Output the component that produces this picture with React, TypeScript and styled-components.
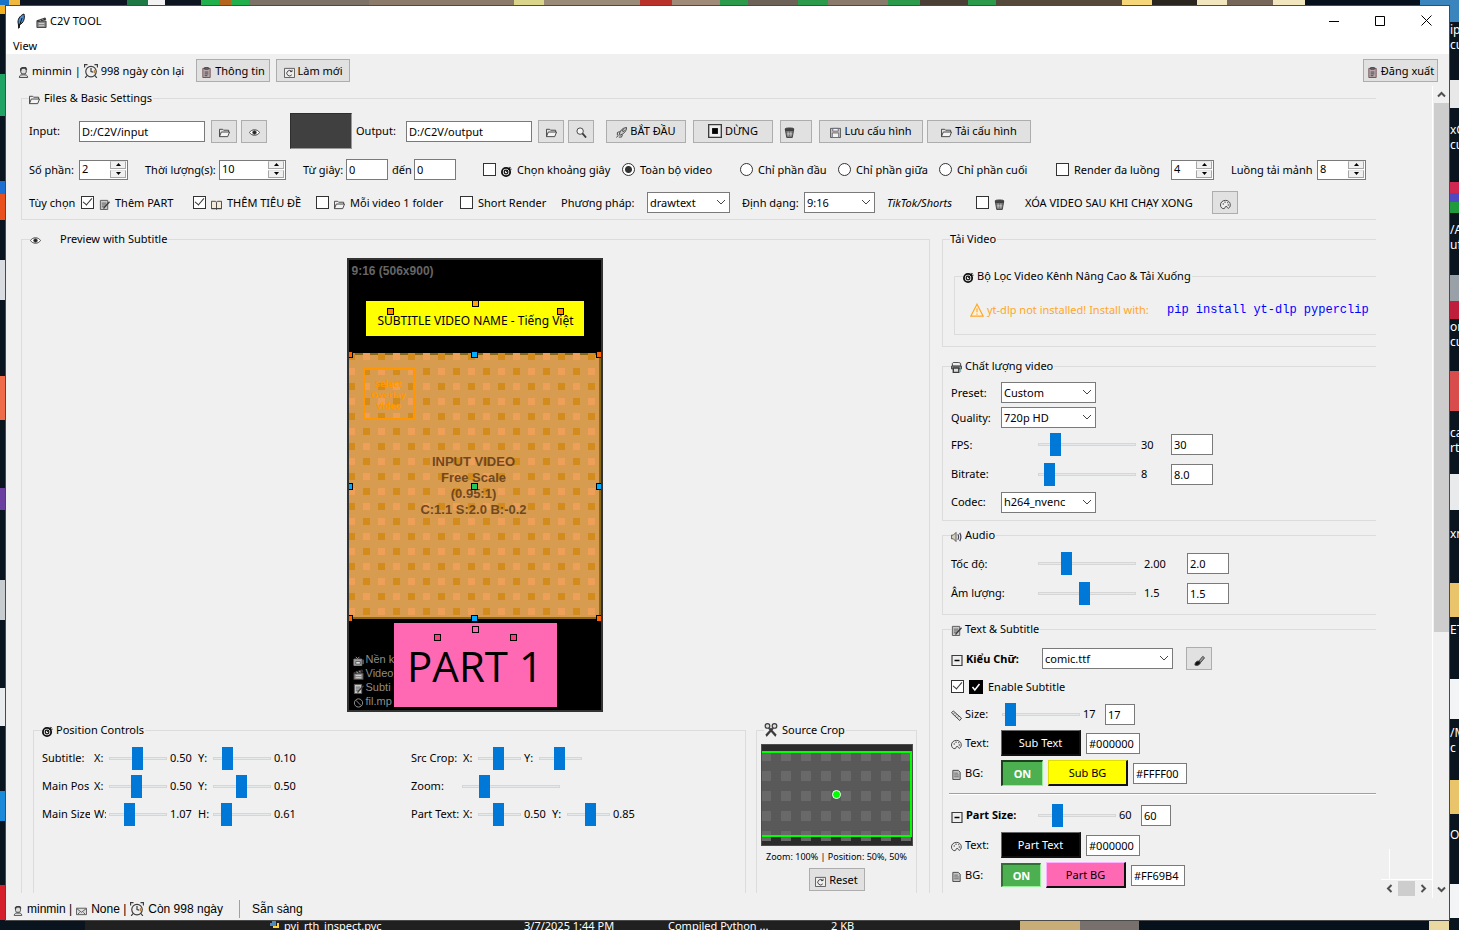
import React from "react";
import styled, { createGlobalStyle, css } from "styled-components";

const ui = `"Noto Sans", "Open Sans", sans-serif`;
const arial = `"Liberation Sans", Arial, sans-serif`;
const face = "#f0f0f0";
const line = "#dcdcdc";

const GlobalStyle = createGlobalStyle`
  *, *::before, *::after { box-sizing: border-box; }
  body { margin: 0; background: #0a141e; }
  button, input, select { font: inherit; color: inherit; margin: 0; }
`;

/* ---------- desktop behind the window ---------- */

const Desktop = styled.div`
  display: grid;
  grid-template: 5px minmax(0, 1fr) 9px / 5px minmax(0, 1fr) 9px;
  height: 100vh;
  min-height: 600px;
  overflow: hidden;
  background: #0a141e;
  color: #fff;
  font: 12px/15px ${ui};
`;

const Strip = styled.div`
  grid-column: 1 / -1;
  display: flex;
  overflow: hidden;
`;

const Swatch = styled.span<{ $w: number; $c: string }>`
  flex: 0 0 ${(p) => p.$w}px;
  background: ${(p) => p.$c};
`;

const Edge = styled.div`
  display: flex;
  flex-direction: column;
  overflow: hidden;
  white-space: nowrap;
`;

const EdgeBit = styled.span<{ $h: number; $c?: string }>`
  flex: 0 0 ${(p) => p.$h}px;
  background: ${(p) => p.$c || "transparent"};
`;

const Explorer = styled.div`
  flex: 0 0 935px;
  display: grid;
  grid-template-columns: 184px 15px 240px 144px 163px auto;
  background: #202020;
  margin-left: 85px;
  font: 11px/9px ${ui};
  white-space: nowrap;
`;

/* ---------- window frame ---------- */

const Window = styled.main`
  display: flex;
  flex-direction: column;
  min-width: 0;
  min-height: 0;
  border: 1px solid #4a4a4a;
  background: ${face};
  color: #000;
  font: 11px/16px ${ui};
  white-space: nowrap;
`;

const TitleBar = styled.header`
  display: flex;
  align-items: center;
  flex: 0 0 29px;
  background: #fff;
`;

const Feather = styled.svg`
  margin: 0 7px 0 9px;
`;

const WindowTitle = styled.h1`
  flex: 1;
  margin: 0 0 0 3px;
  font: 11px/16px ${ui};
`;

const CaptionButton = styled.button`
  display: grid;
  place-items: center;
  width: 46px;
  height: 29px;
  padding: 0;
  border: 0;
  background: none;
`;

const MenuBar = styled.nav`
  display: flex;
  align-items: flex-end;
  flex: 0 0 19px;
  padding-left: 6px;
  background: #fff;
`;

const MenuItem = styled.button`
  padding: 0 1px;
  border: 0;
  background: none;
`;

const Toolbar = styled.div`
  display: flex;
  align-items: center;
  flex: 0 0 33px;
  gap: 6px;
  padding: 0 11px 0 12px;
`;

const Account = styled.span`
  display: flex;
  align-items: center;
  gap: 3px;
  width: 172px;
`;

const Grow = styled.span`
  flex: 1;
`;

const Body = styled.div`
  display: flex;
  flex: 1;
  min-height: 0;
  margin-top: 3px;
`;

const Main = styled.div`
  display: flex;
  flex-direction: column;
  flex: 1;
  min-width: 0;
  margin-bottom: 5px;
  padding-left: 15px;
  overflow: hidden;
`;

const Columns = styled.div`
  display: grid;
  grid-template-columns: minmax(0, 1fr) 434px;
  column-gap: 12px;
  flex: 1;
  min-height: 0;
  margin-top: 11px;
`;

const Column = styled.div`
  display: flex;
  flex-direction: column;
  min-width: 0;
  min-height: 0;
`;

const Group = styled.fieldset<{ $pad?: string; $open?: boolean; $right?: boolean; $grow?: boolean; $gap?: number }>`
  min-width: 0;
  margin: ${(p) => p.$gap || 0}px 0 0;
  padding: ${(p) => p.$pad || "6px 0 5px 8px"};
  border: 1px solid ${line};
  ${(p) => !p.$right && css`border-right: 0;`}
  ${(p) => p.$open && css`border-bottom: 0;`}
  ${(p) => p.$grow && css`flex: 1 0 auto;`}
`;

const Legend = styled.legend<{ $gap?: number }>`
  display: flex;
  align-items: center;
  gap: ${(p) => p.$gap || 3}px;
  height: 16px;
  padding: 0 1px 0 0;
`;

const Grid = styled.div<{ $cols: string; $h: number; $mt?: number }>`
  display: grid;
  grid-template-columns: ${(p) => p.$cols};
  align-items: center;
  justify-items: start;
  height: ${(p) => p.$h}px;
  margin-top: ${(p) => p.$mt || 0}px;
`;

/* ---------- controls ---------- */

const Btn = styled.button<{ $w: number; $left?: boolean }>`
  display: flex;
  align-items: center;
  justify-content: ${(p) => (p.$left ? "flex-start" : "center")};
  gap: 3px;
  width: ${(p) => p.$w}px;
  height: 23px;
  padding: 0 3px;
  border: 1px solid #adadad;
  background: #e1e1e1;
`;

const Entry = styled.input<{ $w: number }>`
  width: ${(p) => p.$w}px;
  height: 21px;
  padding: 0 2px;
  border: 1px solid #7a7a7a;
  background: #fff;
`;

const SpinBox = styled.span<{ $w: number }>`
  display: flex;
  width: ${(p) => p.$w}px;
  height: 20px;
  border: 1px solid #7a7a7a;
  background: #fff;
`;

const SpinInput = styled.input`
  flex: 1;
  min-width: 0;
  height: 16px;
  padding: 0 2px;
  border: 0;
  background: none;
`;

const SpinButtons = styled.span`
  display: grid;
  grid-template-rows: 8px 8px;
  gap: 1px;
  width: 17px;
  padding-right: 1px;
`;

const SpinButton = styled.button`
  display: grid;
  place-items: center;
  padding: 0;
  border: 1px solid #a6a6a6;
  border-top-color: #e3e3e3;
  background: ${face};
`;

const SelectBox = styled.span<{ $w: number }>`
  position: relative;
  display: block;
  width: ${(p) => p.$w}px;
  height: 21px;
  svg { position: absolute; right: 4px; top: 7px; pointer-events: none; }
`;

const SelectInput = styled.select`
  appearance: none;
  width: 100%;
  height: 100%;
  padding: 0 2px;
  border: 1px solid #7a7a7a;
  border-radius: 0;
  background: #fff;
`;

const Check = styled.input`
  appearance: none;
  display: grid;
  flex: 0 0 13px;
  height: 13px;
  border: 1px solid #333;
  background: #fff;
  &:checked::after {
    content: "";
    width: 5px;
    height: 9px;
    margin: -1px 0 0 3px;
    border: solid #333;
    border-width: 0 1px 1px 0;
    transform: rotate(40deg);
  }
`;

const Radio = styled.input`
  appearance: none;
  flex: 0 0 13px;
  height: 13px;
  border: 1px solid #333;
  border-radius: 50%;
  background: #fff;
  &:checked { background: radial-gradient(circle, #333 0 3px, #fff 4px); }
`;

const Option = styled.label`
  display: flex;
  align-items: center;
  gap: 5px;
`;

const Clip = styled.label<{ $w?: number }>`
  display: flex;
  align-items: center;
  gap: 3px;
  width: ${(p) => (p.$w ? p.$w + "px" : "auto")};
  overflow: hidden;
`;

const BoldClip = styled(Clip)`
  font-weight: 700;
`;

const Range = styled.input<{ $w: number }>`
  appearance: none;
  width: ${(p) => p.$w}px;
  height: 23px;
  background: none;
  &::-webkit-slider-runnable-track {
    height: 3px;
    border: 1px solid #d6d6d6;
    background: #e7eaea;
  }
  &::-webkit-slider-thumb {
    appearance: none;
    width: 11px;
    height: 23px;
    margin-top: -11px;
    background: #0078d7;
  }
`;

const ColorButton = styled.button<{ $bg: string; $fg: string; $hi: string }>`
  width: 80px;
  height: 26px;
  padding: 0;
  border: 2px solid;
  border-width: 1px 2px 2px 1px;
  border-color: ${(p) => p.$hi} #111 #111 ${(p) => p.$hi};
  background: ${(p) => p.$bg};
  color: ${(p) => p.$fg};
`;

const OnButton = styled.button<{ $w: number; $h: number; $dark: string }>`
  width: ${(p) => p.$w}px;
  height: ${(p) => p.$h}px;
  padding: 0;
  border: 2px solid;
  border-width: 2px 1px 1px 2px;
  border-color: ${(p) => p.$dark} #98f09c #98f09c ${(p) => p.$dark};
  background: #4caf50;
  color: #fff;
  font-weight: 700;
`;

const Separator = styled.hr`
  height: 2px;
  margin: 5px 0 5px -2px;
  border: 0;
  border-top: 1px solid #a0a0a0;
  background: #fff;
`;

const Warning = styled.span`
  display: flex;
  align-items: center;
  gap: 3px;
  color: #ffa726;
`;

const Command = styled.code`
  color: #0000ff;
  font: 12px/16px "Liberation Mono", monospace;
`;

/* ---------- preview canvas ---------- */

const Stage = styled.div`
  position: relative;
  width: 256px;
  height: 454px;
  margin: 3px auto 10px;
  border: 2px solid #333;
  background: #000;
  overflow: hidden;
  font-family: ${arial};
`;

const Placed = styled.div<{ $x: number; $y: number }>`
  position: absolute;
  left: ${(p) => p.$x}px;
  top: ${(p) => p.$y}px;
`;

const Ratio = styled(Placed)`
  color: #666;
  font-size: 12px;
  font-weight: 700;
`;

const SubtitleBox = styled(Placed)`
  display: flex;
  align-items: center;
  justify-content: center;
  width: 218px;
  height: 35px;
  padding: 4px 0 0 2px;
  background: #ff0;
  font: 12px/16px "Comic Sans MS", ${ui};
`;

const PartBox = styled(Placed)`
  display: flex;
  align-items: center;
  justify-content: center;
  width: 163px;
  height: 84px;
  padding-top: 2px;
  background: #ff69b4;
  font: 500 42px/48px "Comic Sans MS", "Open Sans", sans-serif;
`;

const VideoInfo = styled(Placed)`
  width: 250px;
  color: #704820;
  font-size: 13px;
  font-weight: 700;
  line-height: 16px;
  text-align: center;
`;

const OverlayBox = styled(Placed)`
  display: grid;
  place-items: center;
  width: 52px;
  height: 52px;
  border: 2px solid #ff9800;
  color: #ff9800;
  font: 700 9px/11px ${ui};
  text-align: center;
  white-space: pre;
`;

const Handle = styled(Placed)<{ $c: string }>`
  width: 7px;
  height: 7px;
  border: 1px solid #000;
  background: ${(p) => p.$c};
`;

const LayerList = styled(Placed)`
  display: grid;
  grid-template-columns: 13px auto;
  grid-auto-rows: 14px;
  align-items: center;
  color: #8c8c8c;
  font-size: 11px;
  line-height: 14px;
`;

const Bottom = styled.div`
  display: flex;
  flex: 1;
  gap: 10px;
  padding: 0 10px 0 11px;
`;

const PreviewGroup = styled(Group)`
  display: flex;
  flex-direction: column;
  flex: 1;
`;

const PositionGroup = styled(Group)`
  flex: 1;
`;

const CropGroup = styled(Group)`
  flex: 0 0 161px;
`;

const Positions = styled.div`
  display: grid;
  grid-template-columns: 369px auto;
  justify-content: start;
`;

const CropPane = styled.div`
  display: flex;
  flex-direction: column;
  align-items: center;
`;

const CropCaption = styled.span`
  margin: 3px 0 3px;
  font-size: 9px;
`;

/* ---------- scrollbars and status ---------- */

const Gutter = styled.div`
  display: flex;
  flex-direction: column;
  justify-content: flex-end;
  flex: 0 0 56px;
  padding: 0 0 2px 5px;
`;

const GutterMark = styled.span`
  width: 1px;
  height: 30px;
  margin-left: 8px;
  background: #fff;
`;

const HScroll = styled.div`
  display: grid;
  grid-template-columns: 17px 17px 17px;
  align-items: center;
  justify-items: center;
  height: 17px;
  border-top: 1px solid #fff;
`;

const VScroll = styled.div`
  display: flex;
  flex-direction: column;
  align-items: center;
  flex: 0 0 17px;
  margin-top: -4px;
  border-left: 1px solid #fff;
`;

const VTrack = styled.div`
  flex: 1;
  width: 15px;
`;

const Thumb = styled.div`
  width: 100%;
  background: #cdcdcd;
`;

const VThumb = styled(Thumb)`
  height: 68%;
`;

const HThumb = styled(Thumb)`
  height: 15px;
`;

const ArrowButton = styled.button`
  display: grid;
  place-items: center;
  width: 15px;
  height: 17px;
  padding: 0;
  border: 0;
  background: none;
`;

const StatusBar = styled.footer`
  display: flex;
  align-items: center;
  flex: 0 0 22px;
  padding-left: 7px;
  font: 12px/18px ${arial};
`;

const StatusText = styled.span`
  padding-left: 12px;
  border-left: 1px solid #a0a0a0;
`;

const StatusUser = styled.span`
  display: flex;
  align-items: center;
  gap: 4px;
  width: 226px;
`;

/* ---------- icons ---------- */

const shapes: Record<string, React.ReactNode> = {
  user: <><path d="M4 1.500h4l1 2v2l-1 2H4l-1-2v-2z" fill="#ddd" /><path d="M3 4V2l2-1.500h3L9.500 3" strokeWidth="1.600" /><path d="M1.500 11.500c0-3 2-3 4.500-3s4.500 0 4.500 3z" fill="#ddd" /></>,
  clock: <><circle cx="6" cy="6.500" r="4.500" fill="#eee" /><path d="M6 3.500v3l2 .500M.500 3V.500h2.500M9 .500h2.500V3M2.500 10l-1.500 2M9.500 10l1.500 2" /><path d="M9 5v3" stroke="#b98b4a" /></>,
  clip: <><path d="M2 1.500h8v10H2z" fill="#b9a9a9" stroke="#6d4c4c" /><path d="M4 .500h4v2H4zM4 5.500h4M4 7.500h4M4 9.500h3" stroke="#3b3f55" /></>,
  refresh: <><path d="M.500 1.500h11v10H.500z" fill="#eee" stroke="#555" /><path d="M8.500 5A3 3 0 1 0 8.500 8.500M6.500 5h2.300V3" /></>,
  folder: <><path d="M.500 10.500V2.500h3.500l1 1h5.500v2" /><path d="M.500 10.500l2-5h9l-2 5z" fill="#f4f4f4" /></>,
  eye: <><path d="M.500 6C3 2 9 2 11.500 6 9 10 3 10 .500 6z" fill="#fff" /><circle cx="6" cy="6" r="1.900" fill="#222" /></>,
  search: <><circle cx="4.500" cy="4.500" r="3.500" fill="#f4f4f4" /><path d="M7 7l4 4.500" strokeWidth="2" /></>,
  rocket: <><path d="M3.500 8.500C4 4 7 1 11.500.500 11.500 5 8 8 4 9z" fill="#c8c8c8" /><path d="M4 5L1.500 6v3M7 8.500L6 11H3M2.500 9l-2 2.500" /><circle cx="8" cy="4" r="1" fill="#fff" /></>,
  stop: <><path d="M.500.500h11v11H.500z" fill="#eee" strokeWidth="1.300" /><path d="M3.500 3.500h5v5h-5z" fill="#000" stroke="none" /></>,
  trash: <><path d="M1.500 3l1.500 8.500h6L10.500 3z" fill="#777" /><ellipse cx="6" cy="2.500" rx="5" ry="1.500" fill="#444" /><path d="M4.500 5v5M7.500 5v5M3 7.500h6" stroke="#ddd" strokeWidth=".7" /></>,
  floppy: <><path d="M.500 1.500h11v10H.500z" fill="#c9c6ae" stroke="#555" /><path d="M3 1.500h6v3H3zM2.500 6.500h7v5h-7z" fill="#f2f2f2" stroke="#667" /></>,
  target: <><circle cx="5.500" cy="6.500" r="4.500" fill="#e8e8e8" strokeWidth="2" stroke="#111" /><circle cx="5.500" cy="6.500" r="2" stroke="#111" strokeWidth="1.300" /><path d="M5.500 6.500l5-5M9 1v2.500h2.500" stroke="#111" /></>,
  memo: <><path d="M1.500 1.500h8v10h-8z" fill="#c9c9c9" stroke="#555" /><path d="M3 4.500h5M3 6.500h5M3 8.500h3" stroke="#444" strokeWidth=".8" /><path d="M11.500 3L6 9l-1 1.500" strokeWidth="1.400" /></>,
  book: <><path d="M.500 2.500h4.500l1 1 1-1h4.500v8H7l-1 1-1-1H.500z" fill="#f3ead9" /><path d="M6 3.500v7.500M.500 10.500h11" /></>,
  palette: <><path d="M6 1.500C2.500 1.500.500 4 .500 6.500s2 4.500 4 4c1.500-.500.500-2 2-2.500s1.500 3 3 2 2-3 1.500-5-2.500-3.500-5-3.500z" fill="#eee" /><path d="M3 5.500h1M5 3.500h1M8 4h1M8.500 6.500h1" strokeWidth="1.500" /></>,
  scissors: <><circle cx="3" cy="2.500" r="2" fill="#ddd" /><circle cx="9" cy="2.500" r="2" fill="#ddd" /><path d="M4 4.500l6 7M8 4.500l-6 7M5 4.500l5.500 6M7 4.500l-5.500 6" /></>,
  printer: <><path d="M2.500.500h6l2 1v3h-9v-3z" fill="#eee" /><path d="M.500 4.500h11v3H.500z" fill="#999" /><path d="M2.500 6.500h6v5h-6z" fill="#ddd" strokeWidth="1.500" /><path d="M10.500 7v4" stroke="#5fa8a8" /></>,
  speaker: <><path d="M.500 4.500h2l3-3v10l-3-3h-2z" fill="#d8cdb8" stroke="#555" /><path d="M7.500 3.500c1 2 1 4 0 6M9.500 2c1.700 3 1.700 6 0 9" stroke="#445" strokeWidth="1.300" /></>,
  minus: <><path d="M1 1.500h10v10H1z" fill="#eee" strokeWidth="1.200" /><path d="M3.500 6.500h5" stroke="#000" strokeWidth="1.500" /></>,
  ruler: <><path d="M.500 3l2-2 9 8-2 2.500z" fill="#ddd" /><path d="M4 3L3 4M6 5L5 6M8 7L7 8" /></>,
  page: <><path d="M2 1.500h6l2 2v8H2z" fill="#c4c4c4" stroke="#444" /><path d="M3.500 4.500h4M3.500 6.500h5M3.500 8.500h5" stroke="#555" strokeWidth=".8" /></>,
  brush: <><path d="M5.500 6.500l4-5 2 1.500-4 5z" fill="#999" /><path d="M1 11c0-3 2-4.500 4-4.500l2 2c-.500 2-3 3.500-6 2.500z" fill="#111" /></>,
  card: <><path d="M.500 3.500h11v7H.500z" fill="#ddd" stroke="#555" /><path d="M1 4l5 4 5-4M2 10l2-2M10 10L8 8" stroke="#555" /></>,
  tv: <><path d="M1 4.500h8.500v7H1z" fill="#aaa" stroke="#888" /><path d="M3 7h5v3H3z" fill="#ddd" stroke="#555" /><path d="M3 2l2 2 2-2M11 5v5" stroke="#999" /></>,
  clapper: <><path d="M1 4.500h10v7H1z" fill="#888" /><path d="M1 4l9-3 .700 2L2 5z" fill="#222" /><path d="M3 7h6M3 9.500h6M4 3l1 1.500M7 2l1 1.500" stroke="#eee" strokeWidth=".8" /></>,
  ban: <><circle cx="6" cy="6.500" r="4.500" stroke="#999" /><path d="M3 3.500l6 6" stroke="#999" /></>,
  warn: <><path d="M6 1L.700 11.300h10.600z" stroke="#ffa726" fill="#fff3dc" /><path d="M6 4.500v3.500M6 9v1" stroke="#ffa726" /></>,
  tick: <><path d="M0 0h12v12H0z" fill="#000" stroke="none" /><path d="M3 6l2 2.500L9 3.500" stroke="#fff" strokeWidth="1.300" /></>,
};

const Icon = ({ n, s = 12 }: { n: string; s?: number }) => (
  <svg width={s} height={s} viewBox="0 0 12 12" fill="none" stroke="#3c3c3c" strokeWidth="1" aria-hidden="true">
    {shapes[n]}
  </svg>
);

const LowIcon = styled.span`
  display: flex;
  padding-top: 3px;
`;

const I = ({ n, s }: { n: string; s?: number }) => (
  <LowIcon>
    <Icon n={n} s={s || 11} />
  </LowIcon>
);

const turns: Record<string, number> = { up: 0, right: 90, down: 180, left: 270 };
const Chevron = ({ dir, label }: { dir: string; label: string }) => (
  <ArrowButton aria-label={label}>
    <svg width="9" height="9" viewBox="0 0 9 9" fill="none" stroke="#505050" strokeWidth="2">
      <path d="M1 6.500L4.500 3 8 6.500" transform={`rotate(${turns[dir]} 4.500 4.500)`} />
    </svg>
  </ArrowButton>
);

/* ---------- composed controls ---------- */

const Spin = ({ w, v, label }: { w: number; v: string; label: string }) => (
  <SpinBox $w={w}>
    <SpinInput defaultValue={v} aria-label={label} />
    <SpinButtons>
      <SpinButton aria-label={`${label} +`}>
        <svg width="5" height="3"><path d="M0 3h5L2.500 0z" /></svg>
      </SpinButton>
      <SpinButton aria-label={`${label} -`}>
        <svg width="5" height="3"><path d="M0 0h5L2.500 3z" /></svg>
      </SpinButton>
    </SpinButtons>
  </SpinBox>
);

const Select = ({ w, v, label }: { w: number; v: string; label: string }) => (
  <SelectBox $w={w}>
    <SelectInput defaultValue={v} aria-label={label}>
      <option>{v}</option>
    </SelectInput>
    <svg width="10" height="7" fill="none" stroke="#444">
      <path d="M1 1l4 4 4-4" />
    </svg>
  </SelectBox>
);

/* A slider's value is the travel of its 11px thumb along the track. */
const Slide = ({ w, at, label }: { w: number; at: number; label: string }) => (
  <Range type="range" $w={w} min={0} max={w - 11} defaultValue={at} aria-label={label} />
);

const checker = (
  <svg width="252" height="268" viewBox="0 0 252 268">
    <defs>
      <pattern id="tiles" x="-1" y="0" width="30" height="30" patternUnits="userSpaceOnUse">
        <rect width="7" height="7" fill="#d38c1c" />
        <rect x="15" y="15" width="7" height="7" fill="#d38c1c" />
        <rect x="15" width="7" height="7" fill="#efa058" />
        <rect y="15" width="7" height="7" fill="#efa058" />
      </pattern>
    </defs>
    <rect width="252" height="266" fill="#d89c50" />
    <rect width="252" height="264" fill="url(#tiles)" />
    <path d="M6 1h246" stroke="#8b6914" strokeWidth="2" strokeDasharray="8 7" />
    <path d="M0 265h251V0" fill="none" stroke="#8b6914" strokeWidth="2" />
  </svg>
);

const cropView = (
  <svg width="152" height="102" viewBox="0 0 152 102">
    <defs>
      <pattern id="crop" x="0" y="7" width="20" height="20" patternUnits="userSpaceOnUse">
        <rect width="10" height="10" fill="#696969" />
      </pattern>
    </defs>
    <rect width="152" height="102" fill="#2b2b2b" />
    <rect x="1" y="7" width="150" height="86" fill="#595959" />
    <rect x="1" y="7" width="150" height="90" fill="url(#crop)" />
    <path d="M1 8h149v84H1" fill="none" stroke="#0f0" strokeWidth="2" />
    <rect x=".5" y=".5" width="151" height="101" fill="none" stroke="#4d4d4d" />
    <circle cx="75.500" cy="50.500" r="4" fill="#0f0" stroke="#fff" />
  </svg>
);

const leftCols = "52px 15px 61px 28px 15px 61px auto";
const sizeRow = "87px 103px 30px auto";

const Thumbnail = styled.span`
  width: 62px;
  height: 36px;
  border: 1px solid #2e2e2e;
  border-bottom-color: #999;
  border-right-color: #999;
  background: #404040;
`;

const PreviewLegend = styled(Legend)`
  margin-left: 8px;
`;

const CropLegend = styled(Legend)`
  margin-left: 3px;
`;

const OutsetLegend = styled(Legend)`
  margin-left: -7px;
`;

const DownloadLegend = styled(Legend)`
  margin-left: -4px;
`;

const PreviewBody = styled.div`
  display: flex;
  flex-direction: column;
  height: 100%;
  padding: 8px 2px 0 0;
`;

export default function App() {
  return (
    <>
      <GlobalStyle />
      <Desktop>
        <Strip>
          <Swatch $w={9} $c="#1673c8" /><Swatch $w={11} $c="#f0b83c" /><Swatch $w={107} $c="#0d1620" />
          <Swatch $w={21} $c="#1e7a44" /><Swatch $w={17} $c="#f3f3f3" /><Swatch $w={36} $c="#0d1620" />
          <Swatch $w={18} $c="#22b04c" /><Swatch $w={12} $c="#b5651d" /><Swatch $w={18} $c="#22b04c" />
          <Swatch $w={120} $c="#7d7268" /><Swatch $w={145} $c="#8c7b6a" /><Swatch $w={30} $c="#d9d58a" />
          <Swatch $w={96} $c="#9a8a78" /><Swatch $w={32} $c="#b8322a" /><Swatch $w={48} $c="#a08a78" />
          <Swatch $w={28} $c="#2b9a4a" /><Swatch $w={50} $c="#6d6258" /><Swatch $w={30} $c="#2b9a4a" />
          <Swatch $w={60} $c="#8a7a6c" /><Swatch $w={32} $c="#2b9a4a" /><Swatch $w={48} $c="#4a3f35" />
          <Swatch $w={28} $c="#2b9a4a" /><Swatch $w={126} $c="#55493c" /><Swatch $w={30} $c="#f5d77a" />
          <Swatch $w={45} $c="#2a251f" /><Swatch $w={30} $c="#f1e6bd" /><Swatch $w={46} $c="#77675b" />
          <Swatch $w={32} $c="#f1e6bd" /><Swatch $w={115} $c="#07111c" /><Swatch $w={39} $c="#3a85bd" />
        </Strip>
        <Edge>
          <EdgeBit $h={9} $c="#f0b020" /><EdgeBit $h={60} /><EdgeBit $h={42} $c="#21a366" />
          <EdgeBit $h={65} /><EdgeBit $h={13} $c="#1d6fd1" /><EdgeBit $h={26} $c="#e8501e" />
          <EdgeBit $h={40} /><EdgeBit $h={40} $c="#d9dde2" /><EdgeBit $h={76} /><EdgeBit $h={44} $c="#ef6c4a" />
          <EdgeBit $h={68} /><EdgeBit $h={22} $c="#6b3fa0" /><EdgeBit $h={70} /><EdgeBit $h={40} $c="#c7ccd1" />
          <EdgeBit $h={68} /><EdgeBit $h={38} $c="#e8ecef" /><EdgeBit $h={65} /><EdgeBit $h={30} $c="#1a8bd8" />
          <EdgeBit $h={64} /><EdgeBit $h={35} $c="#d5202c" />
        </Edge>
        <Window>
          <TitleBar>
            <Feather width="14" height="16" viewBox="0 0 14 16" aria-hidden="true">
              <path d="M4 15L3 9c0-4 3-7 6-8 1 4 0 9-5 11z" fill="#4d8fd0" stroke="#111" />
              <path d="M3.500 15.500L7 5" stroke="#111" fill="none" />
            </Feather>
            <I n="clapper" />
            <WindowTitle>C2V TOOL</WindowTitle>
            <CaptionButton aria-label="Minimize">
              <svg width="10" height="10"><path d="M0 5.500h10" stroke="#000" /></svg>
            </CaptionButton>
            <CaptionButton aria-label="Maximize">
              <svg width="10" height="10"><path d="M.5.5h9v9h-9z" stroke="#000" fill="none" /></svg>
            </CaptionButton>
            <CaptionButton aria-label="Close">
              <svg width="11" height="11"><path d="M.5.5l10 10M10.500.5l-10 10" stroke="#000" fill="none" /></svg>
            </CaptionButton>
          </TitleBar>
          <MenuBar><MenuItem>View</MenuItem></MenuBar>
          <Toolbar>
            <Account>
              <I n="user" /> minmin | <Icon n="clock" s={14} /> 998 ngày còn lại
            </Account>
            <Btn $w={74}><I n="clip" /> Thông tin</Btn>
            <Btn $w={74}><I n="refresh" /> Làm mới</Btn>
            <Grow />
            <Btn $w={75}><I n="clip" /> Đăng xuất</Btn>
          </Toolbar>

          <Body>
            <Main>
              <Group $pad="7px 0 5px 7px">
                <Legend $gap={4}><I n="folder" /> Files &amp; Basic Settings</Legend>
                <Grid $h={35} $cols="50px 132px 30px 49px 66px 50px 132px 30px 38px 87px 87px 39px 108px 104px">
                  <label htmlFor="in">Input:</label>
                  <Entry id="in" $w={126} defaultValue="D:/C2V/input" />
                  <Btn $w={26} aria-label="Browse input"><I n="folder" /></Btn>
                  <Btn $w={26} aria-label="View input"><I n="eye" /></Btn>
                  <Thumbnail />
                  <label htmlFor="out">Output:</label>
                  <Entry id="out" $w={126} defaultValue="D:/C2V/output" />
                  <Btn $w={26} aria-label="Browse output"><I n="folder" /></Btn>
                  <Btn $w={26} aria-label="Search output"><I n="search" /></Btn>
                  <Btn $w={80}><I n="rocket" /> BẮT ĐẦU</Btn>
                  <Btn $w={80}><Icon n="stop" s={14} /> DỪNG</Btn>
                  <Btn $w={32} $left aria-label="Delete"><I n="trash" /></Btn>
                  <Btn $w={104}><I n="floppy" /> Lưu cấu hình</Btn>
                  <Btn $w={104}><I n="folder" /> Tải cấu hình</Btn>
                </Grid>
                <Grid $h={21} $mt={11} $cols="50px 66px 74px 84px 43px 46px 22px 69px 139px 118px 98px 101px 117px 115px 60px 86px 49px">
                  <span>Số phần:</span>
                  <Spin w={49} v="2" label="Số phần" />
                  <span>Thời lượng(s):</span>
                  <Spin w={67} v="10" label="Thời lượng" />
                  <label htmlFor="from">Từ giây:</label>
                  <Entry id="from" $w={42} defaultValue="0" />
                  <label htmlFor="to">đến</label>
                  <Entry id="to" $w={42} defaultValue="0" />
                  <Option><Check type="checkbox" /><I n="target" /> Chọn khoảng giây</Option>
                  <Option><Radio type="radio" name="part" defaultChecked /> Toàn bộ video</Option>
                  <Option><Radio type="radio" name="part" /> Chỉ phần đầu</Option>
                  <Option><Radio type="radio" name="part" /> Chỉ phần giữa</Option>
                  <Option><Radio type="radio" name="part" /> Chỉ phần cuối</Option>
                  <Option><Check type="checkbox" /> Render đa luồng</Option>
                  <Spin w={43} v="4" label="Render đa luồng" />
                  <span>Luồng tải mảnh</span>
                  <Spin w={49} v="8" label="Luồng tải mảnh" />
                </Grid>
                <Grid $h={23} $mt={11} $cols="52px 112px 123px 144px 101px 86px 95px 62px 83px 89px 49px 187px 26px">
                  <span>Tùy chọn</span>
                  <Option><Check type="checkbox" defaultChecked /><I n="memo" /> Thêm PART</Option>
                  <Option><Check type="checkbox" defaultChecked /><I n="book" /> THÊM TIÊU ĐỀ</Option>
                  <Option><Check type="checkbox" /><I n="folder" /> Mỗi video 1 folder</Option>
                  <Option><Check type="checkbox" /> Short Render</Option>
                  <span>Phương pháp:</span>
                  <Select w={83} v="drawtext" label="Phương pháp" />
                  <span>Định dạng:</span>
                  <Select w={71} v="9:16" label="Định dạng" />
                  <em>TikTok/Shorts</em>
                  <Option><Check type="checkbox" id="wipe" /><I n="trash" /></Option>
                  <label htmlFor="wipe">XÓA VIDEO SAU KHI CHẠY XONG</label>
                  <Btn $w={26} aria-label="Theme"><I n="palette" /></Btn>
                </Grid>
              </Group>

              <Columns>
                <Column>
                  <PreviewGroup $pad="0" $open $right>
                    <PreviewLegend $gap={19}><I n="eye" /> Preview with Subtitle</PreviewLegend>
                    <PreviewBody>
                      <Stage>
                        <Ratio $x={3} $y={3}>9:16 (506x900)</Ratio>
                        <SubtitleBox $x={17} $y={41}>SUBTITLE VIDEO NAME - Tiếng Việt</SubtitleBox>
                        <Handle $x={38} $y={48} $c="#ff8c00" />
                        <Handle $x={123} $y={40} $c="#ffa500" />
                        <Handle $x={208} $y={48} $c="#ff8c00" />
                        <Placed $x={0} $y={93}>{checker}</Placed>
                        <OverlayBox $x={14} $y={108}>{"Select\nOverlay\nVideo"}</OverlayBox>
                        <VideoInfo $x={0} $y={194}>
                          INPUT VIDEO<br />Free Scale<br />(0.95:1)<br />C:1.1 S:2.0 B:-0.2
                        </VideoInfo>
                        <Handle $x={-3} $y={91} $c="#ff6600" />
                        <Handle $x={122} $y={91} $c="#00aaff" />
                        <Handle $x={247} $y={91} $c="#ff6600" />
                        <Handle $x={-3} $y={223} $c="#00aaff" />
                        <Handle $x={122} $y={223} $c="#22c55e" />
                        <Handle $x={247} $y={223} $c="#00aaff" />
                        <Handle $x={-3} $y={355} $c="#ff6600" />
                        <Handle $x={122} $y={355} $c="#00aaff" />
                        <Handle $x={247} $y={355} $c="#ff6600" />
                        <LayerList $x={4} $y={392}>
                          <I n="tv" /><span>Nền k</span>
                          <I n="clapper" /><span>Video</span>
                          <I n="memo" /><span>Subti</span>
                          <I n="ban" /><span>fil.mp</span>
                        </LayerList>
                        <PartBox $x={45} $y={363}>PART 1</PartBox>
                        <Handle $x={85} $y={374} $c="#ff3d7f" />
                        <Handle $x={123} $y={366} $c="#ff69b4" />
                        <Handle $x={161} $y={374} $c="#ff3d7f" />
                      </Stage>
                      <Bottom>
                        <PositionGroup $pad="6px 0 0 8px" $open $right>
                          <Legend><I n="target" /> Position Controls</Legend>
                          <Positions>
                            <div>
                              <Grid $h={28} $cols={leftCols}>
                                <Clip $w={48}>Subtitle:</Clip><Clip $w={12}>X:</Clip><Slide w={58} at={23} label="Subtitle X" />
                                <span>0.50</span><span>Y:</span><Slide w={58} at={8} label="Subtitle Y" /><span>0.10</span>
                              </Grid>
                              <Grid $h={28} $cols={leftCols}>
                                <Clip $w={48}>Main Pos</Clip><Clip $w={12}>X:</Clip><Slide w={58} at={22} label="Main X" />
                                <span>0.50</span><span>Y:</span><Slide w={58} at={23} label="Main Y" /><span>0.50</span>
                              </Grid>
                              <Grid $h={28} $cols={leftCols}>
                                <Clip $w={48}>Main Size</Clip><Clip $w={12}>W:</Clip><Slide w={58} at={15} label="Main W" />
                                <span>1.07</span><span>H:</span><Slide w={58} at={7} label="Main H" /><span>0.61</span>
                              </Grid>
                            </div>
                            <div>
                              <Grid $h={28} $cols="52px 15px 46px 15px auto">
                                <span>Src Crop:</span><span>X:</span><Slide w={43} at={15} label="Crop X" />
                                <span>Y:</span><Slide w={43} at={15} label="Crop Y" />
                              </Grid>
                              <Grid $h={28} $cols="51px auto">
                                <span>Zoom:</span><Slide w={98} at={16} label="Zoom" />
                              </Grid>
                              <Grid $h={28} $cols="52px 15px 46px 28px 15px 46px auto">
                                <span>Part Text:</span><span>X:</span><Slide w={43} at={15} label="Part X" />
                                <span>0.50</span><span>Y:</span><Slide w={43} at={18} label="Part Y" /><span>0.85</span>
                              </Grid>
                            </div>
                          </Positions>
                        </PositionGroup>
                        <CropGroup $pad="6px 4px 0" $open $right>
                          <CropLegend $gap={4}><Icon n="scissors" s={14} /> Source Crop</CropLegend>
                          <CropPane>
                            {cropView}
                            <CropCaption>Zoom: 100% | Position: 50%, 50%</CropCaption>
                            <Btn $w={56}><I n="refresh" /> Reset</Btn>
                          </CropPane>
                        </CropGroup>
                      </Bottom>
                    </PreviewBody>
                  </PreviewGroup>
                </Column>

                <Column>
                  <Group $pad="21px 0 11px 11px">
                    <DownloadLegend>Tải Video</DownloadLegend>
                    <Group $pad="14px 0 12px 15px">
                      <OutsetLegend><I n="target" /> Bộ Lọc Video Kênh Nâng Cao &amp; Tải Xuống</OutsetLegend>
                      <Grid $h={24} $cols="197px auto">
                        <Warning><Icon n="warn" s={14} /> yt-dlp not installed! Install with:</Warning>
                        <Command>pip install yt-dlp pyperclip</Command>
                      </Grid>
                    </Group>
                  </Group>

                  <Group $gap={11}>
                    <Legend><I n="printer" /> Chất lượng video</Legend>
                    <Grid $h={25} $cols="50px auto"><span>Preset:</span><Select w={95} v="Custom" label="Preset" /></Grid>
                    <Grid $h={25} $cols="50px auto"><span>Quality:</span><Select w={95} v="720p HD" label="Quality" /></Grid>
                    <Grid $h={29} $cols={sizeRow}>
                      <span>FPS:</span><Slide w={98} at={11} label="FPS" /><span>30</span>
                      <Entry $w={42} defaultValue="30" aria-label="FPS" />
                    </Grid>
                    <Grid $h={30} $cols={sizeRow}>
                      <span>Bitrate:</span><Slide w={98} at={5} label="Bitrate" /><span>8</span>
                      <Entry $w={42} defaultValue="8.0" aria-label="Bitrate" />
                    </Grid>
                    <Grid $h={26} $cols="50px auto"><span>Codec:</span><Select w={95} v="h264_nvenc" label="Codec" /></Grid>
                  </Group>

                  <Group $gap={6} $pad="6px 0 6px 8px">
                    <Legend><I n="speaker" /> Audio</Legend>
                    <Grid $h={29} $cols="87px 106px 43px auto">
                      <span>Tốc độ:</span><Slide w={98} at={23} label="Tốc độ" /><span>2.00</span>
                      <Entry $w={42} defaultValue="2.0" aria-label="Tốc độ" />
                    </Grid>
                    <Grid $h={30} $cols="87px 106px 43px auto">
                      <span>Âm lượng:</span><Slide w={98} at={41} label="Âm lượng" /><span>1.5</span>
                      <Entry $w={42} defaultValue="1.5" aria-label="Âm lượng" />
                    </Grid>
                  </Group>

                  <Group $gap={6} $open $grow $pad="7px 0 0 8px">
                    <Legend><I n="memo" /> Text &amp; Subtitle</Legend>
                    <Grid $h={29} $cols="91px 144px auto">
                      <BoldClip><I n="minus" s={12} /> Kiểu Chữ:</BoldClip>
                      <Select w={131} v="comic.ttf" label="Kiểu Chữ" />
                      <Btn $w={26} aria-label="Brush"><I n="brush" /></Btn>
                    </Grid>
                    <Grid $h={27} $cols="auto">
                      <Option><Check type="checkbox" defaultChecked /><Icon n="tick" s={14} /> Enable Subtitle</Option>
                    </Grid>
                    <Grid $h={28} $cols="51px 81px 22px auto">
                      <Clip><I n="ruler" /> Size:</Clip><Slide w={78} at={2} label="Size" /><span>17</span>
                      <Entry $w={30} defaultValue="17" aria-label="Size" />
                    </Grid>
                    <Grid $h={30} $cols="50px 85px auto">
                      <Clip><I n="palette" /> Text:</Clip>
                      <ColorButton $bg="#000" $fg="#fff" $hi="#666">Sub Text</ColorButton>
                      <Entry $w={54} defaultValue="#000000" aria-label="Sub text color" />
                    </Grid>
                    <Grid $h={30} $cols="50px 47px 85px auto">
                      <Clip><I n="page" /> BG:</Clip>
                      <OnButton $w={42} $h={26} $dark="#1c3f1e">ON</OnButton>
                      <ColorButton $bg="#ff0" $fg="#000" $hi="#dede00">Sub BG</ColorButton>
                      <Entry $w={54} defaultValue="#FFFF00" aria-label="Sub background" />
                    </Grid>
                    <Separator />
                    <Grid $h={30} $cols="87px 81px 22px auto">
                      <BoldClip><I n="minus" s={12} /> Part Size:</BoldClip>
                      <Slide w={78} at={13} label="Part size" /><span>60</span>
                      <Entry $w={30} defaultValue="60" aria-label="Part size" />
                    </Grid>
                    <Grid $h={30} $cols="50px 85px auto">
                      <Clip><I n="palette" /> Text:</Clip>
                      <ColorButton $bg="#000" $fg="#fff" $hi="#666">Part Text</ColorButton>
                      <Entry $w={54} defaultValue="#000000" aria-label="Part text color" />
                    </Grid>
                    <Grid $h={30} $cols="50px 45px 85px auto">
                      <Clip><I n="page" /> BG:</Clip>
                      <OnButton $w={40} $h={24} $dark="#2f7032">ON</OnButton>
                      <ColorButton $bg="#ff69b4" $fg="#000" $hi="#ffb0ff">Part BG</ColorButton>
                      <Entry $w={54} defaultValue="#FF69B4" aria-label="Part background" />
                    </Grid>
                  </Group>
                </Column>
              </Columns>
            </Main>

            <Gutter>
              <GutterMark />
              <HScroll>
                <Chevron dir="left" label="Scroll left" />
                <HThumb />
                <Chevron dir="right" label="Scroll right" />
              </HScroll>
            </Gutter>
            <VScroll>
              <Chevron dir="up" label="Scroll up" />
              <VTrack><VThumb /></VTrack>
              <Chevron dir="down" label="Scroll down" />
            </VScroll>
          </Body>

          <StatusBar>
            <StatusUser>
              <I n="user" s={10} /> minmin | <I n="card" /> None | <Icon n="clock" s={14} /> Còn 998 ngày
            </StatusUser>
            <StatusText>Sẵn sàng</StatusText>
          </StatusBar>
        </Window>
        <Edge>
          <EdgeBit $h={17} $c="#3a85bd" /><span>ip</span><span>cu</span><EdgeBit $h={28} />
          <EdgeBit $h={28} $c="#e8e8e8" /><EdgeBit $h={14} /><span>xG</span><span>cu</span><EdgeBit $h={30} />
          <EdgeBit $h={11} $c="#d02850" /><EdgeBit $h={9} $c="#5048c0" /><EdgeBit $h={11} $c="#1f9a3c" />
          <EdgeBit $h={9} /><span>/A</span><span>uf</span><EdgeBit $h={23} /><EdgeBit $h={26} $c="#9aa0a8" />
          <EdgeBit $h={18} $c="#c01f3c" /><span>on</span><span>cu</span><EdgeBit $h={22} /><EdgeBit $h={40} $c="#d84c4c" />
          <EdgeBit $h={14} /><span>ca</span><span>rt</span><EdgeBit $h={19} /><EdgeBit $h={36} $c="#e8eaec" />
          <EdgeBit $h={16} /><span>xn</span><EdgeBit $h={42} /><EdgeBit $h={34} $c="#e9c46a" /><EdgeBit $h={5} /><span>ET</span>
          <EdgeBit $h={42} /><EdgeBit $h={40} $c="#f3f4f6" /><EdgeBit $h={6} /><span>/M</span><span>c</span>
          <EdgeBit $h={25} /><EdgeBit $h={34} $c="#e9c46a" /><EdgeBit $h={13} /><span>O</span><EdgeBit $h={42} />
          <EdgeBit $h={34} $c="#f3f4f6" />
        </Edge>
        <Strip>
          <Explorer>
            <Swatch $w={184} $c="#202020" />
            <svg width="11" height="9" viewBox="0 0 11 9" aria-hidden="true">
              <path d="M3 0h4v5H1V2h2z" fill="#4b8bbe" />
              <path d="M8 2h2v5H4V5h4z" fill="#ffd43b" />
            </svg>
            <span>pyi_rth_inspect.pyc</span>
            <span>3/7/2025 1:44 PM</span>
            <span>Compiled Python ...</span>
            <span>2 KB</span>
          </Explorer>
          <Swatch $w={60} $c="#c8ad78" /><Swatch $w={59} $c="#77706c" /><Swatch $w={290} $c="#07111c" />
          <Swatch $w={20} $c="#e9d9a0" />
        </Strip>
      </Desktop>
    </>
  );
}
